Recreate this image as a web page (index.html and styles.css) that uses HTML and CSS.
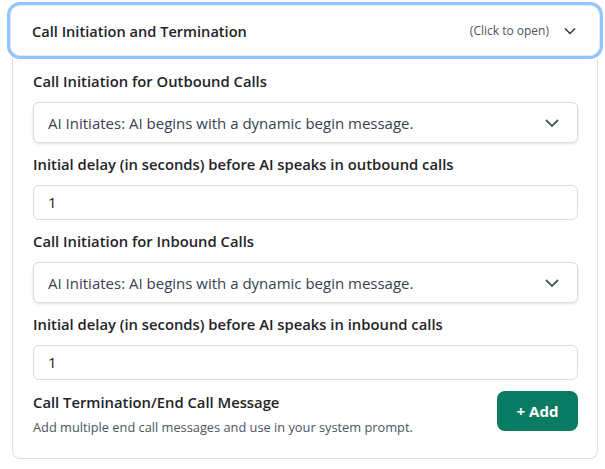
FILE: index.html
```html
<!DOCTYPE html>
<html lang="en">

<head>
    <meta charset="UTF-8">
    <meta name="viewport" content="width=device-width, initial-scale=1.0">
    <title>Call Initiation and Termination</title>
    <link rel="stylesheet" href="styles.css">
</head>

<body>

    <div class="section">
        <div class="section-header">
            <span class="section-title">Call Initiation and Termination</span>
            <span class="section-hint">(Click to open)</span>
            <svg class="chevron" width="14" height="14" viewBox="0 0 14 14">
                <path d="M2 4.5 L7 9.5 L12 4.5" fill="none" stroke="#333" stroke-width="1.4" />
            </svg>
        </div>

        <div class="section-body">
            <div class="field">
                <label class="field-label">Call Initiation for Outbound Calls</label>
                <div class="select-box">
                    <span>AI Initiates: AI begins with a dynamic begin message.</span>
                    <svg width="20" height="20" viewBox="0 0 20 20">
                        <path d="M4 7 L10 13 L16 7" fill="none" stroke="#4b5563" stroke-width="1.8" />
                    </svg>
                </div>
            </div>

            <div class="field">
                <label class="field-label">Initial delay (in seconds) before AI speaks in outbound calls</label>
                <div class="text-input">1</div>
            </div>

            <div class="field">
                <label class="field-label">Call Initiation for Inbound Calls</label>
                <div class="select-box">
                    <span>AI Initiates: AI begins with a dynamic begin message.</span>
                    <svg width="20" height="20" viewBox="0 0 20 20">
                        <path d="M4 7 L10 13 L16 7" fill="none" stroke="#4b5563" stroke-width="1.8" />
                    </svg>
                </div>
            </div>

            <div class="field">
                <label class="field-label">Initial delay (in seconds) before AI speaks in inbound calls</label>
                <div class="text-input">1</div>
            </div>

            <div class="end-call">
                <div>
                    <div class="field-label">Call Termination/End Call Message</div>
                    <div class="end-call-note">Add multiple end call messages and use in your system prompt.</div>
                </div>
                <button class="add-button">+ Add</button>
            </div>
        </div>
    </div>

</body>

</html>
```

FILE: styles.css
```css
body {
    font-family: "Open Sans", "Noto Sans", sans-serif;
    margin: 0;
    padding: 0;
    background-color: #fff;
    color: #1f2328;
}

.section {
    width: 586px;
    margin: 5px 0 0 12px;
}

.section-header {
    display: flex;
    align-items: center;
    height: 49px;
    margin-left: -2px;
    margin-right: -2px;
    padding: 0 22px 0 21px;
    border: 1px solid #e5e7eb;
    border-radius: 10px;
    box-shadow: 0 0 0 3px #93c5fd;
    background-color: #fff;
    position: relative;
    z-index: 1;
}

.section-title {
    font-size: 14.6px;
    font-weight: 600;
    flex: 1;
}

.section-hint {
    font-size: 12px;
    color: #4b5563;
    margin-right: 14px;
}

.chevron {
    display: block;
}

.section-body {
    border: 1px solid #dcdfe3;
    border-top: none;
    border-radius: 0 0 8px 8px;
    padding: 12px 19px 22px 20px;
    margin-top: 3px;
}

.field {
    margin-bottom: 11px;
}

.field-label {
    display: block;
    font-size: 14.8px;
    font-weight: 600;
    line-height: 20px;
    margin-bottom: 11px;
}

.select-box {
    display: flex;
    align-items: center;
    justify-content: space-between;
    height: 39px;
    padding: 0 15px 0 14px;
    border: 1px solid #d9dce1;
    border-radius: 6px;
    box-shadow: 0 1px 3px rgba(0, 0, 0, 0.12);
    font-size: 15px;
    color: #374151;
}

.text-input {
    height: 33px;
    line-height: 33px;
    padding: 0 14px;
    border: 1px solid #d9dce1;
    border-radius: 6px;
    font-size: 15px;
    color: #1f2328;
}

.end-call {
    display: flex;
    justify-content: space-between;
    align-items: flex-start;
    padding-top: 1px;
}

.end-call .field-label {
    margin-bottom: 7px;
}

.end-call-note {
    font-size: 12.8px;
    line-height: 17px;
    color: #4b5563;
}

.add-button {
    margin-top: -1px;
    width: 81px;
    height: 40px;
    border: none;
    border-radius: 8px;
    background-color: #087b62;
    color: #fff;
    font-family: inherit;
    font-size: 15px;
    font-weight: 700;
    cursor: pointer;
}

.add-button:hover {
    background-color: #066651;
}
```
